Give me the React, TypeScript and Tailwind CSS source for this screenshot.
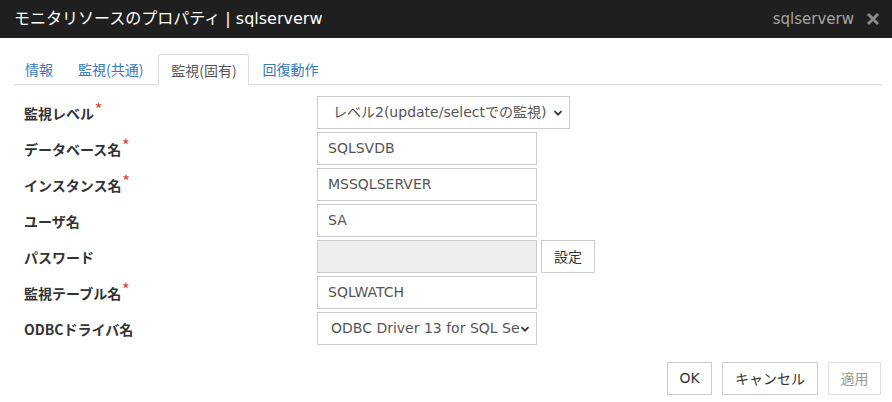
import React from "react";

const font = { fontFamily: '"Noto Sans CJK JP", "Noto Sans", sans-serif' };
const latin = { fontFamily: '"DejaVu Sans", "Noto Sans CJK JP", sans-serif' };

function Req() {
  return <span className="text-[#d9534f] text-[14px] relative -top-[5px] ml-[1px] font-bold">*</span>;
}

function Chevron() {
  return (
    <svg width="10" height="10" viewBox="0 0 10 10" className="shrink-0">
      <path d="M1.5 3.2 L5 6.7 L8.5 3.2" fill="none" stroke="#333" strokeWidth="1.8" />
    </svg>
  );
}

function Row({ label, req, children }: { label: string; req?: boolean; children: React.ReactNode }) {
  return (
    <div className="flex items-center">
      <div className="w-[293px] text-[14px] font-bold text-[#333] leading-5">
        {label}
        {req && <Req />}
      </div>
      {children}
    </div>
  );
}

function Input({ value, disabled }: { value?: string; disabled?: boolean }) {
  return (
    <div
      className={`w-[220px] h-[33px] border border-[#ccc] px-[10px] flex items-center text-[14px] text-[#555] ${
        disabled ? "bg-[#eee]" : "bg-white"
      }`}
      style={latin}
    >
      {value}
    </div>
  );
}

export default function App() {
  return (
    <div className="w-[892px] h-[402px] bg-white overflow-hidden" style={font}>
      <div className="h-[38px] bg-[#1f1f1f] flex items-center justify-between pl-[14px] pr-[12px]">
        <div className="text-white text-[16px]" style={latin}>
          モニタリソースのプロパティ | sqlserverw
        </div>
        <div className="flex items-center gap-[12px]">
          <span className="text-[#a6a6a6] text-[15px]" style={latin}>
            sqlserverw
          </span>
          <svg width="14" height="14" viewBox="0 0 14 14">
            <path d="M2 2 L12 12 M12 2 L2 12" stroke="#8a8a8a" strokeWidth="3" />
          </svg>
        </div>
      </div>

      <div className="mt-[16px] ml-[14px] mr-[10px] flex border-b border-[#ddd] h-[31px]">
        <div className="pl-[11px] pr-[12px] flex items-center text-[14px] text-[#337ab7]">情報</div>
        <div className="pl-[13px] pr-[15px] flex items-center text-[14px] text-[#337ab7]">監視(共通)</div>
        <div className="w-[91px] flex items-center justify-center text-[14px] text-[#555] border border-[#ddd] border-b-white rounded-t-[3px] h-[32px] bg-white">
          監視(固有)
        </div>
        <div className="pl-[13px] pr-[12px] flex items-center text-[14px] text-[#337ab7]">回復動作</div>
      </div>

      <div className="pl-[24px] mt-[11px] flex flex-col gap-[3px]">
        <Row label="監視レベル" req>
          <div
            className="w-[253px] h-[33px] border border-[#ccc] pl-[15px] pr-[6px] flex items-center justify-between text-[14px] text-[#555]"
            style={latin}
          >
            <span className="whitespace-nowrap">レベル2(update/selectでの監視)</span>
            <Chevron />
          </div>
        </Row>
        <Row label="データベース名" req>
          <Input value="SQLSVDB" />
        </Row>
        <Row label="インスタンス名" req>
          <Input value="MSSQLSERVER" />
        </Row>
        <Row label="ユーザ名">
          <Input value="SA" />
        </Row>
        <Row label="パスワード">
          <Input disabled />
          <button className="ml-[4px] w-[54px] h-[33px] border border-[#ccc] bg-white text-[14px] text-[#333] flex items-center justify-center">
            設定
          </button>
        </Row>
        <Row label="監視テーブル名" req>
          <Input value="SQLWATCH" />
        </Row>
        <Row label="ODBCドライバ名">
          <div
            className="w-[220px] h-[33px] border border-[#ccc] pl-[13px] pr-[6px] flex items-center justify-between text-[14px] text-[#555] overflow-hidden"
            style={latin}
          >
            <span className="whitespace-nowrap overflow-hidden">ODBC Driver 13 for SQL Ser</span>
            <Chevron />
          </div>
        </Row>
      </div>

      <div className="flex justify-end gap-[10px] pr-[11px] mt-[17px]">
        <button className="w-[45px] h-[33px] border border-[#ccc] bg-white text-[14px] text-[#333]" style={latin}>
          OK
        </button>
        <button className="w-[96px] h-[33px] border border-[#ccc] bg-white text-[14px] text-[#333]">キャンセル</button>
        <button className="w-[53px] h-[33px] border border-[#e0e0e0] bg-white text-[14px] text-[#999]">適用</button>
      </div>
    </div>
  );
}
